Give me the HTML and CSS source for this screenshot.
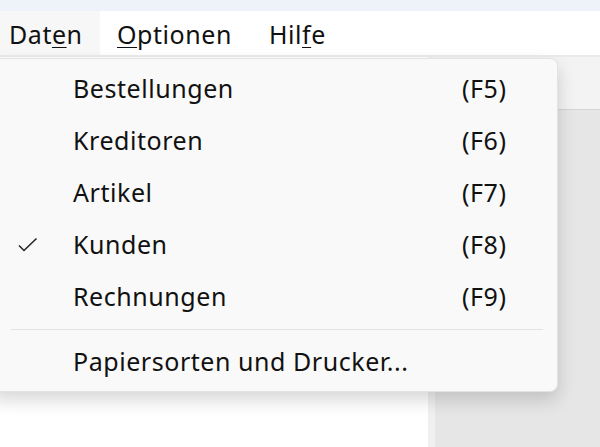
FILE: index.html
```html
<!DOCTYPE html>
<html lang="de">
<head>
<meta charset="utf-8">
<link rel="stylesheet" href="styles.css">
</head>
<body>
<div class="window">
  <div class="titlebar"></div>
  <div class="menubar">
    <div class="mb-item active">Dat<u>e</u>n</div>
    <div class="mb-item"><u>O</u>ptionen</div>
    <div class="mb-item last">Hil<u>f</u>e</div>
  </div>
  <div class="content">
    <div class="left-pane"></div>
    <div class="splitter"></div>
    <div class="right-pane">
      <div class="right-head"></div>
    </div>
  </div>
  <div class="dropdown">
    <div class="item"><span class="check"></span><span class="label">Bestellungen</span><span class="key">(F5)</span></div>
    <div class="item"><span class="check"></span><span class="label">Kreditoren</span><span class="key">(F6)</span></div>
    <div class="item"><span class="check"></span><span class="label">Artikel</span><span class="key">(F7)</span></div>
    <div class="item"><span class="check"><svg width="20" height="16" viewBox="0 0 20 16"><polyline points="1,8.5 6,13.5 18.5,1.5" fill="none" stroke="#262626" stroke-width="1.6"/></svg></span><span class="label">Kunden</span><span class="key">(F8)</span></div>
    <div class="item"><span class="check"></span><span class="label">Rechnungen</span><span class="key">(F9)</span></div>
    <div class="separator"></div>
    <div class="item"><span class="check"></span><span class="label">Papiersorten und Drucker...</span><span class="key"></span></div>
  </div>
</div>
</body>
</html>
```
FILE: styles.css
```css
html, body {
  margin: 0;
  padding: 0;
}
body {
  width: 600px;
  height: 447px;
  overflow: hidden;
  font-family: "Segoe UI", "Noto Sans", "Open Sans", sans-serif;
  color: #111111;
  background: #ffffff;
}
.window {
  position: relative;
  width: 600px;
  height: 447px;
  display: flex;
  flex-direction: column;
}
.titlebar {
  height: 11px;
  background: #eef3fa;
}
.menubar {
  height: 44px;
  background: #ffffff;
  display: flex;
  align-items: stretch;
  border-bottom: 2px solid #ebebeb;
  font-size: 25px;
  letter-spacing: 0.55px;
}
.mb-item {
  display: flex;
  align-items: center;
  padding: 2px 17px 0 17px;
}
.mb-item.active {
  background: #f7f7f7;
  padding-left: 9px;
  width: 74px;
}
.mb-item.last {
  padding-left: 20px;
}
.mb-item u {
  text-decoration-thickness: 1px;
  text-underline-offset: 3px;
}
.content {
  flex: 1;
  display: flex;
}
.left-pane {
  width: 428px;
  background: #ffffff;
}
.splitter {
  width: 7px;
  background: #f0f0f0;
}
.right-pane {
  flex: 1;
  background: #e6e6e6;
}
.right-head {
  height: 52px;
  background: #f3f3f3;
  border-bottom: 1px solid #d6d6d6;
}
.dropdown {
  position: absolute;
  left: -10px;
  top: 58px;
  width: 568px;
  box-sizing: border-box;
  padding: 4px 0 3px 0;
  background: #f9f9f9;
  border: 1px solid #e3e3e3;
  border-radius: 8px;
  box-shadow: 0 8px 18px rgba(0, 0, 0, 0.16);
  font-size: 25px;
  letter-spacing: 0.55px;
}
.item {
  height: 52px;
  box-sizing: border-box;
  padding-bottom: 3px;
  display: flex;
  align-items: center;
}
.check {
  width: 82px;
  display: flex;
  justify-content: flex-start;
  padding-left: 27px;
  box-sizing: border-box;
}
.check svg {
  display: block;
  margin-top: 3px;
}
.label {
  width: 389px;
  white-space: nowrap;
}
.key {
  white-space: nowrap;
}
.separator {
  height: 1px;
  background: #e3e3e3;
  margin: 6px 14px 6px 20px;
}
```
